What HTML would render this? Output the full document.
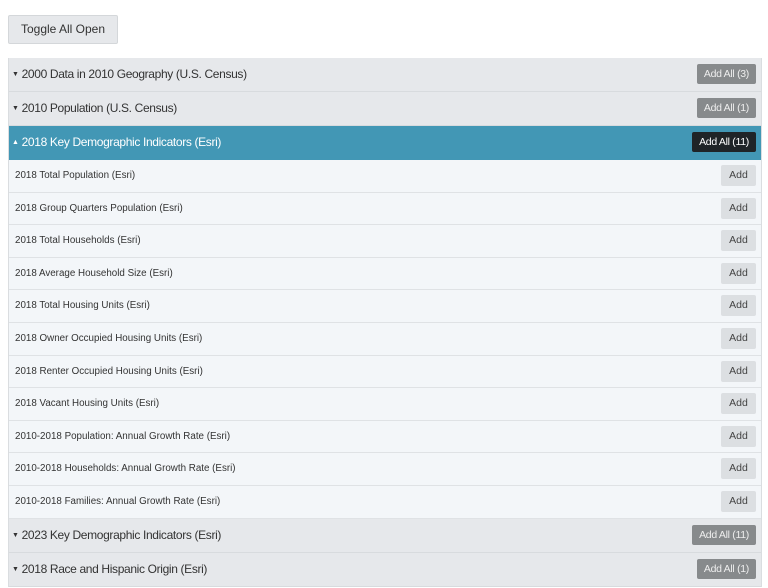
<!DOCTYPE html>
<html><head><style>
body{margin:0;background:#fff;font-family:"Liberation Sans",sans-serif;width:768px;height:588px;overflow:hidden;position:relative}
.tog{position:absolute;left:8px;top:15px;width:108px;height:27px;background:#e6e8eb;border:1px solid #d4d7da;border-radius:2px;font-size:12px;color:#333;line-height:27px;text-align:center}
.list{position:absolute;left:8px;top:58px;width:752px;border-left:1px solid #dadde0;border-right:1px solid #dadde0}
.h{height:33px;background:#e6e8eb;border-bottom:1px solid #d8dbde;position:relative;font-size:12px;color:#333;line-height:33px;padding-left:3px;letter-spacing:-0.35px}
.h.a{background:#4297b5;color:#fff;border-bottom-color:#4297b5}
.h .t{font-size:7px;position:relative;top:-2px;margin-right:3px}
.h .b{position:absolute;right:5px;top:6px;height:20px;line-height:20px;padding:0 7px;background:#878a8c;color:#eee;font-size:10.5px;border-radius:2px;letter-spacing:-0.3px}
.h.a .b{background:#1f2427;color:#fff}
.r{height:31.6px;background:#f3f6f9;border-bottom:1px solid #dfe2e5;position:relative;font-size:9.8px;color:#333;line-height:31.6px;padding-left:6px}
.r .b{position:absolute;right:5px;top:5px;height:21px;line-height:21px;width:35px;text-align:center;background:#dcdfe2;color:#444;font-size:10.5px;border-radius:2px}
</style></head><body>
<div class="tog">Toggle All Open</div>
<div class="list">
<div class="h"><span class="t">▼</span>2000 Data in 2010 Geography (U.S. Census)<span class="b">Add All (3)</span></div>
<div class="h"><span class="t">▼</span>2010 Population (U.S. Census)<span class="b">Add All (1)</span></div>
<div class="h a"><span class="t">▲</span>2018 Key Demographic Indicators (Esri)<span class="b">Add All (11)</span></div>
<div class="r">2018 Total Population (Esri)<span class="b">Add</span></div>
<div class="r">2018 Group Quarters Population (Esri)<span class="b">Add</span></div>
<div class="r">2018 Total Households (Esri)<span class="b">Add</span></div>
<div class="r">2018 Average Household Size (Esri)<span class="b">Add</span></div>
<div class="r">2018 Total Housing Units (Esri)<span class="b">Add</span></div>
<div class="r">2018 Owner Occupied Housing Units (Esri)<span class="b">Add</span></div>
<div class="r">2018 Renter Occupied Housing Units (Esri)<span class="b">Add</span></div>
<div class="r">2018 Vacant Housing Units (Esri)<span class="b">Add</span></div>
<div class="r">2010-2018 Population: Annual Growth Rate (Esri)<span class="b">Add</span></div>
<div class="r">2010-2018 Households: Annual Growth Rate (Esri)<span class="b">Add</span></div>
<div class="r">2010-2018 Families: Annual Growth Rate (Esri)<span class="b">Add</span></div>
<div class="h"><span class="t">▼</span>2023 Key Demographic Indicators (Esri)<span class="b">Add All (11)</span></div>
<div class="h"><span class="t">▼</span>2018 Race and Hispanic Origin (Esri)<span class="b">Add All (1)</span></div>
</div>
</body></html>
